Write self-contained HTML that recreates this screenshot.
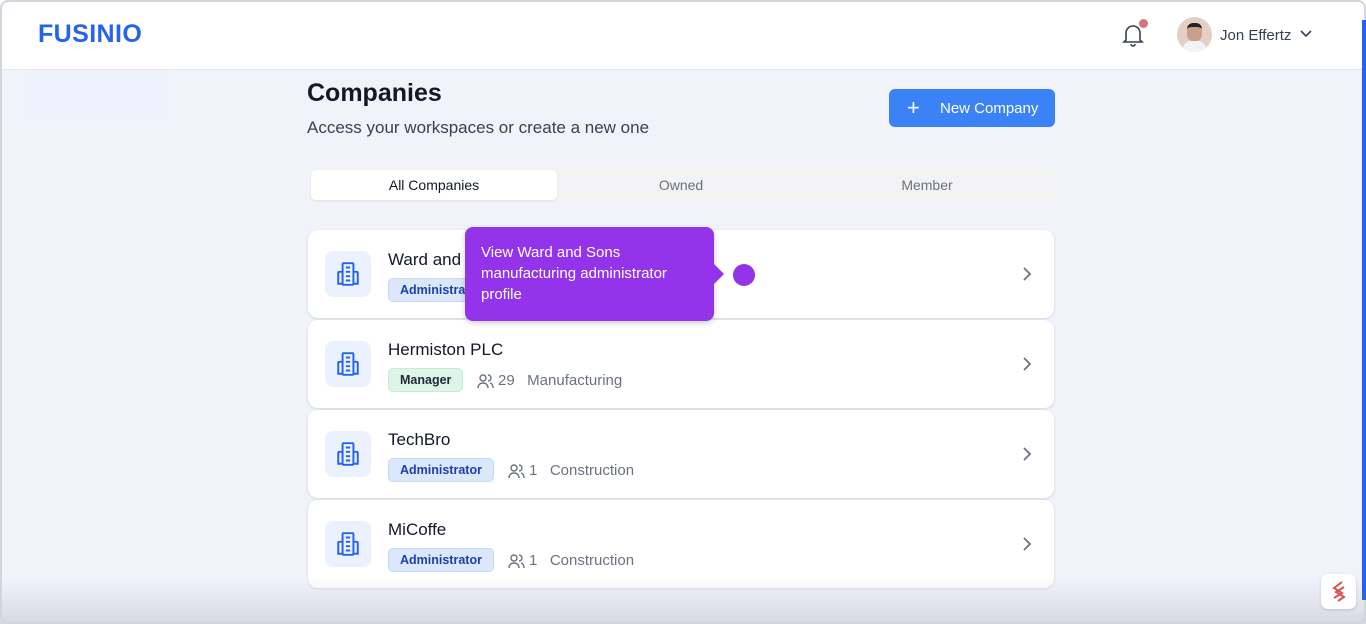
<!DOCTYPE html>
<html><head><meta charset="utf-8"><style>
*{box-sizing:border-box;margin:0;padding:0}
body{width:1366px;height:624px;overflow:hidden;font-family:"Liberation Sans",sans-serif;background:#f1f3fb;position:relative}
.frame{position:absolute;left:0;top:0;width:1366px;height:624px;border:2px solid #d4d4dc;border-radius:8px;pointer-events:none;z-index:20}
.hdr{position:absolute;left:0;top:0;width:1366px;height:70px;background:#fff;border-bottom:1px solid #e5e7eb}
.logo{position:absolute;left:38px;top:20px;font-size:25px;font-weight:bold;color:#2563eb;letter-spacing:0.4px}
.side{position:absolute;left:28px;top:70px;width:137px;height:46px;background:#edf2fc}
h1{position:absolute;left:307px;top:79px;font-size:25px;font-weight:bold;color:#111827}
.sub{position:absolute;left:307px;top:118px;font-size:17px;color:#374151}
.btn{position:absolute;left:889px;top:89px;width:166px;height:38px;background:#3b82f6;border-radius:6px;color:#fff;font-size:15px}
.tabs{position:absolute;left:307px;top:166px;width:748px;height:38px;background:#f3f3f5;border-radius:6px}
.tab{position:absolute;top:4px;height:30px;width:246px;text-align:center;line-height:30px;font-size:14px;color:#6b7280}
.card{position:absolute;left:308px;width:746px;height:88px;background:#fff;border-radius:10px;box-shadow:0 1px 3px rgba(0,0,0,.12)}
.ic{position:absolute;left:17px;top:21px;width:46px;height:46px;background:#ebf2fe;border-radius:8px}
.ic svg{position:absolute;left:10px;top:10px}
.nm{position:absolute;left:80px;top:20px;font-size:17px;color:#111827}
.bd{position:absolute;left:80px;top:48px;height:24px;padding:0 11px;border-radius:5px;font-size:12.5px;font-weight:bold;line-height:23px}
.adm{background:#dbe7fb;color:#1e40af;border:1px solid #c7d8f6}
.mgr{background:#dcf5e7;color:#1f2937;border:1px solid #c8ebd7}
.meta{position:absolute;top:52px;font-size:15px;color:#6b7280;display:flex;align-items:center;gap:4px}
.chev{position:absolute;right:22px;top:36px}
.tip{position:absolute;left:465px;top:227px;width:249px;height:94px;background:#9333ea;border-radius:8px;color:#fff;font-size:15px;line-height:21px;padding:15px 16px;box-shadow:0 2px 6px rgba(0,0,0,.2);z-index:5}
.tip:after{content:"";position:absolute;right:-10px;top:37px;border:10px solid transparent;border-left-color:#9333ea;border-right:0}
.dot{position:absolute;left:733px;top:264px;width:22px;height:22px;border-radius:50%;background:#9333ea;z-index:5}
.fade{position:absolute;left:0;top:578px;width:1366px;height:46px;background:linear-gradient(#f1f3fb00,#d8d8e2);z-index:6}
.fab{position:absolute;left:1321px;top:574px;width:35px;height:35px;background:#fff;border-radius:7px;z-index:7;box-shadow:0 1px 3px rgba(0,0,0,.15)}
.scroll{position:absolute;right:0;top:20px;width:4px;height:580px;background:#2563eb;z-index:21}
</style></head><body>
<div class="hdr">
<div class="logo">FUSINIO</div>
<svg style="position:absolute;left:1122px;top:23px" width="22" height="24" viewBox="0 0 22 24" fill="none" stroke="#374151" stroke-width="1.6"><path d="M4 17V10a7 7 0 0 1 14 0v7l2 2H2z"/><path d="M9 21a2 2 0 0 0 4 0"/></svg>
<div style="position:absolute;left:1139px;top:19px;width:9px;height:9px;border-radius:50%;background:#d9727a"></div>
<div style="position:absolute;left:1177px;top:17px;width:35px;height:35px;border-radius:50%;background:#e2cfc6;overflow:hidden"><div style="position:absolute;left:10px;top:6px;width:15px;height:18px;border-radius:6px;background:#c9a08b;border-top:4px solid #222"></div><div style="position:absolute;left:6px;top:24px;width:23px;height:14px;border-radius:8px 8px 0 0;background:#f3f3f3"></div></div>
<div style="position:absolute;left:1220px;top:27px;font-size:15px;color:#374151">Jon Effertz</div>
<svg style="position:absolute;left:1300px;top:30px" width="12" height="8" viewBox="0 0 12 8" fill="none" stroke="#374151" stroke-width="1.6"><path d="M1 1l5 5 5-5"/></svg>
</div>
<div class="side"></div>
<h1>Companies</h1>
<div class="sub">Access your workspaces or create a new one</div>
<div class="btn"><span style="position:absolute;left:18px;top:6px;font-size:22px;font-weight:300">+</span><span style="position:absolute;left:51px;top:11px">New Company</span></div>
<div class="tabs">
<div class="tab" style="left:4px;background:#fff;color:#111827;border-radius:5px;box-shadow:0 1px 2px rgba(0,0,0,.08)">All Companies</div>
<div class="tab" style="left:251px">Owned</div>
<div class="tab" style="left:497px">Member</div>
</div>

<div class="card" style="top:230px">
<div class="ic"><svg width="26" height="26" viewBox="0 0 24 24" fill="none" stroke="#2563eb" stroke-width="1.8"><rect x="7" y="2" width="10" height="20" rx="1"/><path d="M7 10H4a1 1 0 0 0-1 1v10h4M17 10h3a1 1 0 0 1 1 1v10h-4M10 6h4M10 10h4M10 14h4M10 18h4"/></svg></div>
<div class="nm">Ward and Sons</div><div class="bd adm">Administrator</div>
<svg class="chev" width="10" height="16" viewBox="0 0 10 16" fill="none" stroke="#6b7280" stroke-width="1.8"><path d="M2 2l6 6-6 6"/></svg></div>

<div class="card" style="top:320px">
<div class="ic"><svg width="26" height="26" viewBox="0 0 24 24" fill="none" stroke="#2563eb" stroke-width="1.8"><rect x="7" y="2" width="10" height="20" rx="1"/><path d="M7 10H4a1 1 0 0 0-1 1v10h4M17 10h3a1 1 0 0 1 1 1v10h-4M10 6h4M10 10h4M10 14h4M10 18h4"/></svg></div>
<div class="nm">Hermiston PLC</div><div class="bd mgr">Manager</div>
<div class="meta" style="left:169px"><svg width="17" height="16" viewBox="0 0 17 16" fill="none" stroke="#6b7280" stroke-width="1.4"><circle cx="6" cy="5" r="3"/><path d="M1 15c0-3 2-5 5-5s5 2 5 5M11 2a3 3 0 0 1 0 6M13 10c2 .5 3 2.5 3 5"/></svg>29&nbsp;&nbsp;&nbsp;Manufacturing</div>
<svg class="chev" width="10" height="16" viewBox="0 0 10 16" fill="none" stroke="#6b7280" stroke-width="1.8"><path d="M2 2l6 6-6 6"/></svg></div>

<div class="card" style="top:410px">
<div class="ic"><svg width="26" height="26" viewBox="0 0 24 24" fill="none" stroke="#2563eb" stroke-width="1.8"><rect x="7" y="2" width="10" height="20" rx="1"/><path d="M7 10H4a1 1 0 0 0-1 1v10h4M17 10h3a1 1 0 0 1 1 1v10h-4M10 6h4M10 10h4M10 14h4M10 18h4"/></svg></div>
<div class="nm">TechBro</div><div class="bd adm">Administrator</div>
<div class="meta" style="left:200px"><svg width="17" height="16" viewBox="0 0 17 16" fill="none" stroke="#6b7280" stroke-width="1.4"><circle cx="6" cy="5" r="3"/><path d="M1 15c0-3 2-5 5-5s5 2 5 5M11 2a3 3 0 0 1 0 6M13 10c2 .5 3 2.5 3 5"/></svg>1&nbsp;&nbsp;&nbsp;Construction</div>
<svg class="chev" width="10" height="16" viewBox="0 0 10 16" fill="none" stroke="#6b7280" stroke-width="1.8"><path d="M2 2l6 6-6 6"/></svg></div>

<div class="card" style="top:500px">
<div class="ic"><svg width="26" height="26" viewBox="0 0 24 24" fill="none" stroke="#2563eb" stroke-width="1.8"><rect x="7" y="2" width="10" height="20" rx="1"/><path d="M7 10H4a1 1 0 0 0-1 1v10h4M17 10h3a1 1 0 0 1 1 1v10h-4M10 6h4M10 10h4M10 14h4M10 18h4"/></svg></div>
<div class="nm">MiCoffe</div><div class="bd adm">Administrator</div>
<div class="meta" style="left:200px"><svg width="17" height="16" viewBox="0 0 17 16" fill="none" stroke="#6b7280" stroke-width="1.4"><circle cx="6" cy="5" r="3"/><path d="M1 15c0-3 2-5 5-5s5 2 5 5M11 2a3 3 0 0 1 0 6M13 10c2 .5 3 2.5 3 5"/></svg>1&nbsp;&nbsp;&nbsp;Construction</div>
<svg class="chev" width="10" height="16" viewBox="0 0 10 16" fill="none" stroke="#6b7280" stroke-width="1.8"><path d="M2 2l6 6-6 6"/></svg></div>

<div class="tip">View Ward and Sons manufacturing administrator profile</div>
<div class="dot"></div>
<div class="fade"></div>
<div class="fab"><svg style="position:absolute;left:9px;top:7px" width="17" height="21" viewBox="0 0 17 21" fill="none" stroke="#d9534f" stroke-width="2"><path d="M12 1L4 7l8 5-8 5M14 6l-8 5 8 5-6 4"/></svg></div>
<div class="scroll"></div>
<div class="frame"></div>
</body></html>
